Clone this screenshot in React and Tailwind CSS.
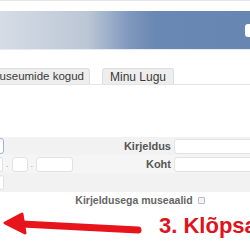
import React from "react";

const App = () => {
  return (
    <div
      className="w-[250px] h-[250px] overflow-hidden bg-white relative"
      style={{ fontFamily: '"Liberation Sans", Arial, sans-serif' }}
    >
      {/* top strip */}
      <div className="h-[11px] border-t border-[#e6e6e6] bg-white" />

      {/* header band */}
      <div className="h-[39px] flex items-center justify-end bg-[linear-gradient(to_right,#d5dce5_0%,#bcc7d6_35%,#7e97bd_52%,#6a88b4_62%,#6886b2_100%)] border-b border-[#e8ecf2]">
        <div className="w-[12px] h-[13px] bg-white rounded-l-[3px] -mr-[7px]" />
      </div>

      {/* tabs */}
      <div className="mt-[19px] flex items-end h-[16px] border-b border-[#e4e4e4]">
        <div className="-ml-[30px] w-[120px] shrink-0 h-[16px] bg-[#eeeeee] border border-b-0 border-[#dddddd] rounded-t-[3px] flex items-center justify-end pr-[5px] text-[11.5px] leading-none text-[#3a3a3a] whitespace-nowrap">
          Muuseumide kogud
        </div>
        <div className="ml-[12px] w-[72px] shrink-0 h-[16px] bg-[#eeeeee] border border-b-0 border-[#dddddd] rounded-t-[3px] flex items-center justify-center text-[12px] leading-none text-[#3a3a3a] whitespace-nowrap">
          Minu Lugu
        </div>
      </div>

      {/* form */}
      <div className="mt-[52px]">
        <div className="h-[18px] bg-[#f2f2f2] flex items-center">
          <div className="w-[6px] h-[16px] -ml-[2px] bg-white border border-[#9bb3d6] rounded-[3px]" />
          <div className="flex-1 text-right pr-[3px] text-[11px] font-bold text-[#555]">Kirjeldus</div>
          <div className="w-[80px] h-[15px] bg-white border border-[#e2e2e2] rounded-[3px] -mr-[4px]" />
        </div>
        <div className="h-[18px] bg-[#f5f5f5] flex items-center">
          <div className="w-[4px] h-[15px] -ml-[1px] bg-white border border-[#e2e2e2] rounded-[3px]" />
          <span className="mx-[3px] text-[9px] text-[#999] leading-none">.</span>
          <div className="w-[16px] h-[15px] bg-white border border-[#e2e2e2] rounded-[3px]" />
          <span className="mx-[3px] text-[9px] text-[#999] leading-none">.</span>
          <div className="w-[37px] h-[15px] bg-white border border-[#e2e2e2] rounded-[3px]" />
          <div className="flex-1 text-right pr-[3px] text-[11px] font-bold text-[#555]">Koht</div>
          <div className="w-[80px] h-[15px] bg-white border border-[#e2e2e2] rounded-[3px] -mr-[4px]" />
        </div>
        <div className="h-[19px] bg-[#f2f2f2] flex items-center">
          <div className="w-[5px] h-[15px] -ml-[1px] bg-white border border-[#e2e2e2] rounded-[3px]" />
        </div>
        <div className="h-[14px] flex items-center justify-center gap-[5px] pl-[30px] mt-[1px]">
          <span className="text-[10.5px] font-bold text-[#666] leading-none">Kirjeldusega museaalid</span>
          <span className="w-[7px] h-[7px] border border-[#bbb] bg-[#f4f4f4] rounded-[1px]" />
        </div>

        {/* annotation */}
        <div className="flex items-center h-[30px] mt-[4px]">
          <svg width="150" height="30" viewBox="0 0 150 30" className="shrink-0">
            <path d="M22 13 L138 19" stroke="#e8141c" strokeWidth="7" strokeLinecap="round" fill="none" />
            <path d="M5 12 L22 3 L25 22 Z" fill="#e8141c" stroke="#e8141c" strokeWidth="3" strokeLinejoin="round" />
          </svg>
          <span className="ml-[9px] text-[22px] font-bold text-[#e0121a] whitespace-nowrap leading-none">
            3. Klõpsa
          </span>
        </div>
      </div>
    </div>
  );
};

export default App;
